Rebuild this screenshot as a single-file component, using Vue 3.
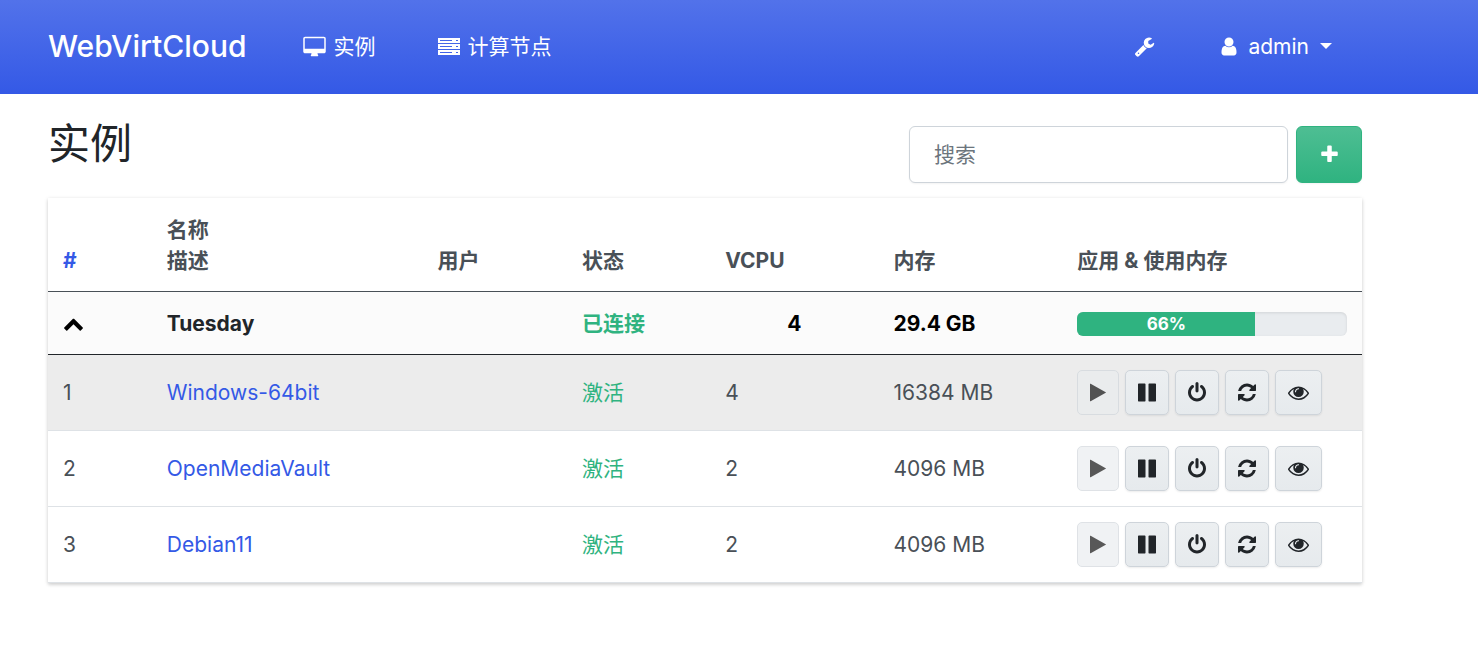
<script setup>
import { ref } from 'vue'

const search = ref('')
const usage = ref(66)

const instances = [
  { id: 1, name: 'Windows-64bit', vcpu: 4, memory: '16384 MB' },
  { id: 2, name: 'OpenMediaVault', vcpu: 2, memory: '4096 MB' },
  { id: 3, name: 'Debian11', vcpu: 2, memory: '4096 MB' },
]

const actions = [
  { key: 'play', label: '启动', box: '0 0 1408 1792', d: 'M1384 927l-1328 738q-23 13-39.500 3t-16.500-36v-1472q0-26 16.500-36t39.500 3l1328 738q23 13 23 31t-23 31z', disabled: true },
  { key: 'pause', label: '暂停', box: '128 0 1536 1792', d: 'M1664 192v1408q0 26-19 45t-45 19h-512q-26 0-45-19t-19-45v-1408q0-26 19-45t45-19h512q26 0 45 19t19 45zm-896 0v1408q0 26-19 45t-45 19h-512q-26 0-45-19t-19-45v-1408q0-26 19-45t45-19h512q26 0 45 19t19 45z' },
  { key: 'power', label: '关机', box: '128 0 1536 1792', d: 'M1664 896q0 156-61 298t-164 245-245 164-298 61-298-61-245-164-164-245-61-298q0-182 80.5-343t226.5-270q43-32 95.5-25t83.5 50q32 42 24.5 94.5t-49.5 84.5q-98 74-151.500 181t-53.500 228q0 104 40.500 198.500t109.500 163.500 163.500 109.500 198.500 40.500 198.500-40.500 163.500-109.500 109.500-163.500 40.500-198.500q0-121-53.500-228t-151.500-181q-42-32-49.500-84.500t24.500-94.500q31-43 84-50t95 25q146 109 226.500 270t80.500 343zm-640-768v640q0 52-38 90t-90 38-90-38-38-90v-640q0-52 38-90t90-38 90 38 38 90z' },
  { key: 'refresh', label: '重启', box: '128 0 1536 1792', d: 'M1639 1056q0 5-1 7-64 268-268 434.500t-478 166.500q-146 0-282.500-55t-243.500-157l-129 129q-19 19-45 19t-45-19-19-45v-448q0-26 19-45t45-19h448q26 0 45 19t19 45-19 45l-137 137q71 66 161 102t187 36q134 0 250-65t186-179q11-17 53-117 8-23 30-23h192q13 0 22.500 9.500t9.500 22.500zm25-800v448q0 26-19 45t-45 19h-448q-26 0-45-19t-19-45 19-45l138-138q-148-137-349-137-134 0-250 65t-186 179q-11 17-53 117-8 23-30 23h-199q-13 0-22.500-9.500t-9.500-22.500v-7q65-268 270-434.500t480-166.500q146 0 284 55.500t245 156.500l130-129q19-19 45-19t45 19 19 45z' },
  { key: 'eye', label: '控制台', box: '0 0 1792 1792', d: 'M1664 960q-152-236-381-353 61 104 61 225 0 185-131.500 316.500t-316.500 131.500-316.500-131.500-131.500-316.500q0-121 61-225-229 117-381 353 133 205 333.500 326.500t434.500 121.500 434.500-121.500 333.500-326.500zm-720-384q0-20-14-34t-34-14q-125 0-214.500 89.500t-89.500 214.500q0 20 14 34t34 14 34-14 14-34q0-86 61-147t147-61q20 0 34-14t14-34zm848 384q0 34-20 69-140 230-376.500 368.500t-499.500 138.500-499.500-139-376.500-368q-20-35-20-69t20-69q140-229 376.500-368t499.500-139 499.500 139 376.500 368q20 35 20 69z' },
]
</script>

<template>
  <div class="page">
    <nav class="navbar">
      <a class="brand" href="#">WebVirtCloud</a>
      <a class="nav-link" href="#instances">
        <svg class="icon-desktop" viewBox="0 0 1920 1792" aria-hidden="true"><path d="M1792 1056v-832q0-13-9.500-22.500t-22.500-9.500h-1600q-13 0-22.500 9.500t-9.500 22.500v832q0 13 9.500 22.500t22.500 9.500h1600q13 0 22.500-9.500t9.500-22.500zm128-832v1088q0 66-47 113t-113 47h-544q0 37 16 77.500t32 71 16 43.500q0 26-19 45t-45 19h-512q-26 0-45-19t-19-45q0-14 16-44t32-70 16-78h-544q-66 0-113-47t-47-113v-1088q0-66 47-113t113-47h1600q66 0 113 47t47 113z" /></svg>
        <span>实例</span>
      </a>
      <a class="nav-link" href="#computes">
        <svg class="icon-server" viewBox="0 0 22 17" aria-hidden="true"><path fill-rule="evenodd" d="M0 0h22v5H0zM2 2v1h12V2zM18 2v1h2V2zM0 6h22v5H0zM2 8v1h12V8zM18 8v1h2V8zM0 12h22v5H0zM2 14v1h12v-1zM18 14v1h2v-1z" /></svg>
        <span>计算节点</span>
      </a>
      <div class="nav-end">
        <a class="nav-link" href="#settings" aria-label="设置">
          <svg class="icon" viewBox="0 0 1792 1792" aria-hidden="true"><path d="M448 1472q0-26-19-45t-45-19-45 19-19 45 19 45 45 19 45-19 19-45zm644-420l-682 682q-37 37-90 37-52 0-91-37l-106-108q-38-36-38-90 0-53 38-91l681-681q39 98 114.500 173.500t173.500 114.500zm634-435q0 39-23 106-47 134-164.500 217.500t-258.500 83.500q-185 0-316.500-131.500t-131.500-316.500 131.500-316.500 316.500-131.500q58 0 121.500 16.500t107.500 46.500q16 11 16 28t-16 28l-293 169v224l193 107q5-3 79-48.500t135.500-81 70.500-35.500q15 0 23.500 10t8.500 25z" /></svg>
        </a>
        <button class="nav-link user-menu" type="button">
          <svg class="icon-user" viewBox="256 0 1280 1792" aria-hidden="true"><path d="M1536 1399q0 109-62.500 187t-150.500 78h-854q-88 0-150.500-78t-62.500-187q0-85 8.500-160.500t31.500-152 58.500-131 94-89 134.500-34.500q131 128 313 128t313-128q76 0 134.500 34.500t94 89 58.500 131 31.500 152 8.500 160.500zm-256-887q0 159-112.500 271.500t-271.500 112.500-271.500-112.500-112.500-271.500 112.500-271.500 271.500-112.500 271.500 112.500 112.500 271.500z" /></svg>
          <span>admin</span>
          <i class="caret"></i>
        </button>
      </div>
    </nav>

    <main class="content">
      <header class="heading">
        <h1>实例</h1>
        <form class="tools" @submit.prevent>
          <input v-model="search" class="search" type="text" placeholder="搜索" aria-label="搜索" />
          <button class="add" type="button" aria-label="新建">
            <svg class="icon" viewBox="0 0 1792 1792" aria-hidden="true"><path d="M1600 736v192q0 40-28 68t-68 28h-416v416q0 40-28 68t-68 28h-192q-40 0-68-28t-28-68v-416h-416q-40 0-68-28t-28-68v-192q0-40 28-68t68-28h416v-416q0-40 28-68t68-28h192q40 0 68 28t28 68v416h416q40 0 68 28t28 68z" /></svg>
          </button>
        </form>
      </header>

      <table class="instances">
        <colgroup>
          <col class="c-id" /><col class="c-name" /><col class="c-user" /><col class="c-status" />
          <col class="c-vcpu" /><col class="c-memory" /><col />
        </colgroup>
        <thead>
          <tr>
            <th class="hash" scope="col">#</th>
            <th scope="col">名称<br />描述</th>
            <th scope="col">用户</th>
            <th scope="col">状态</th>
            <th scope="col">VCPU</th>
            <th scope="col">内存</th>
            <th scope="col">应用 &amp; 使用内存</th>
          </tr>
        </thead>
        <tbody>
          <tr class="host">
            <td>
              <button class="toggle" type="button" aria-label="收起">
                <svg class="icon" viewBox="0 0 1792 1792" aria-hidden="true"><path d="M1683 1331l-166 165q-19 19-45 19t-45-19l-531-531-531 531q-19 19-45 19t-45-19l-166-165q-19-19-19-45.500t19-45.500l742-741q19-19 45-19t45 19l742 741q19 19 19 45.500t-19 45.500z" /></svg>
              </button>
            </td>
            <td><a class="host-name" href="#tuesday">Tuesday</a></td>
            <td></td>
            <td class="ok">已连接</td>
            <td class="center">4</td>
            <td>29.4 GB</td>
            <td>
              <div class="progress" role="progressbar" :aria-valuenow="usage" aria-valuemin="0" aria-valuemax="100">
                <div class="bar" :style="{ width: usage + '%' }">{{ usage }}%</div>
              </div>
            </td>
          </tr>
          <tr v-for="vm in instances" :key="vm.id" class="vm" :class="{ hovered: vm.id === 1 }">
            <td>{{ vm.id }}</td>
            <td><a :href="'#vm-' + vm.id">{{ vm.name }}</a></td>
            <td></td>
            <td class="ok">激活</td>
            <td>{{ vm.vcpu }}</td>
            <td>{{ vm.memory }}</td>
            <td>
              <div class="actions">
                <button v-for="a in actions" :key="a.key" class="action" type="button" :disabled="a.disabled" :aria-label="a.label">
                  <svg :class="'glyph-' + a.key" :viewBox="a.box" aria-hidden="true"><path :d="a.d" /></svg>
                </button>
              </div>
            </td>
          </tr>
        </tbody>
      </table>
    </main>
  </div>
</template>

<style>
body {
  background: #fff;
}
</style>

<style scoped>
.page {
  font-family: Inter, "Noto Sans CJK SC", sans-serif;
  font-size: 21px;
  line-height: 31px;
  color: #495057;
}

.page * {
  box-sizing: border-box;
}

a {
  color: #3459e6;
  text-decoration: none;
}

button {
  font: inherit;
  cursor: pointer;
}

svg {
  display: block;
  flex: none;
  height: 21px;
  fill: currentColor;
}

.icon {
  width: 21px;
}

.navbar {
  display: flex;
  align-items: center;
  height: 94px;
  padding: 0 146px 2px 48px;
  background: linear-gradient(180deg, #5272ea, #3459e6);
}

.brand {
  margin-right: 56px;
  font-size: 30px;
  font-weight: 500;
  color: #fff;
}

.nav-link {
  display: flex;
  align-items: center;
  gap: 8px;
  margin-right: 62px;
  color: #fff;
}

.icon-desktop {
  width: 23px;
}

.icon-server {
  width: 22px;
  height: 17px;
}

.nav-end {
  display: flex;
  align-items: center;
  gap: 4px;
  margin-left: auto;
}

.user-menu {
  gap: 11px;
  margin: 0;
  padding: 0;
  border: 0;
  background: none;
}

.icon-user {
  width: 16px;
}

.caret {
  border-top: 6px solid currentColor;
  border-left: 6px solid transparent;
  border-right: 6px solid transparent;
}

.content {
  padding: 24px 116px 64px 48px;
}

.heading {
  display: flex;
  justify-content: space-between;
  margin-bottom: 15px;
}

h1 {
  margin: 0;
  font-size: 42px;
  font-weight: 400;
  line-height: 52px;
  color: #212529;
}

.tools {
  display: flex;
  gap: 8px;
  margin-top: 8px;
}

.search {
  width: 379px;
  height: 57px;
  padding: 0 24px;
  border: 1px solid #ced4da;
  border-radius: 6px;
  background: #fff;
  box-shadow: 0 1px 2px rgba(0, 0, 0, 0.05);
  font: inherit;
  color: #495057;
}

.search::placeholder {
  color: #6c757d;
  opacity: 1;
}

.add {
  display: flex;
  align-items: center;
  justify-content: center;
  width: 66px;
  height: 57px;
  padding: 0;
  border: 1px solid #2fb380;
  border-radius: 6px;
  background: linear-gradient(180deg, #4ebe93, #2fb380);
  box-shadow: 0 1px 2px rgba(0, 0, 0, 0.05);
  color: #fff;
}

.instances {
  width: 100%;
  table-layout: fixed;
  border-collapse: separate;
  border-spacing: 0;
  box-shadow: 0 1px 4px rgba(0, 0, 0, 0.15), 0 2px 3px rgba(0, 0, 0, 0.08);
}

.c-id { width: 7.9%; }
.c-name { width: 20.6%; }
.c-user { width: 11%; }
.c-status { width: 10.9%; }
.c-vcpu { width: 12.8%; }
.c-memory { width: 14%; }

th {
  padding: 16px 15px 15px;
  border-bottom: 1px solid #495057;
  font-weight: 700;
  text-align: left;
  vertical-align: bottom;
}

.hash {
  color: #3459e6;
}

td {
  padding: 15px;
  border-bottom: 1px solid #dee2e6;
  vertical-align: middle;
}

.host td {
  padding-top: 16px;
  border-bottom-color: #212529;
  background: #fbfbfb;
  font-weight: 700;
  color: #000;
}

.host .host-name {
  color: #212529;
}

.toggle {
  display: block;
  padding: 0;
  border: 0;
  background: none;
  color: #000;
}

.center {
  text-align: center;
}

td.ok,
.host td.ok {
  color: #2fb380;
}

.hovered td {
  background: #ececec;
}

.progress {
  height: 24px;
  overflow: hidden;
  border-radius: 6px;
  background: #e9ecef;
  box-shadow: inset 0 1px 3px rgba(0, 0, 0, 0.1);
}

.bar {
  height: 100%;
  background: #2fb380;
  font-size: 17px;
  line-height: 24px;
  text-align: center;
  color: #fff;
}

.actions {
  display: flex;
  gap: 6px;
}

.action {
  display: flex;
  align-items: center;
  height: 45px;
  padding: 0 12px;
  border: 1px solid #ced4da;
  border-radius: 5px;
  background: linear-gradient(180deg, #eceff1, #e6eaed);
  box-shadow: 0 1px 2px rgba(0, 0, 0, 0.08);
  color: #212529;
}

.action:disabled {
  background: #e9ecef;
  box-shadow: none;
  opacity: 0.65;
  color: #000;
}

.glyph-play {
  width: 16px;
}

.glyph-pause,
.glyph-power,
.glyph-refresh {
  width: 18px;
}

.glyph-eye {
  width: 21px;
}
</style>
